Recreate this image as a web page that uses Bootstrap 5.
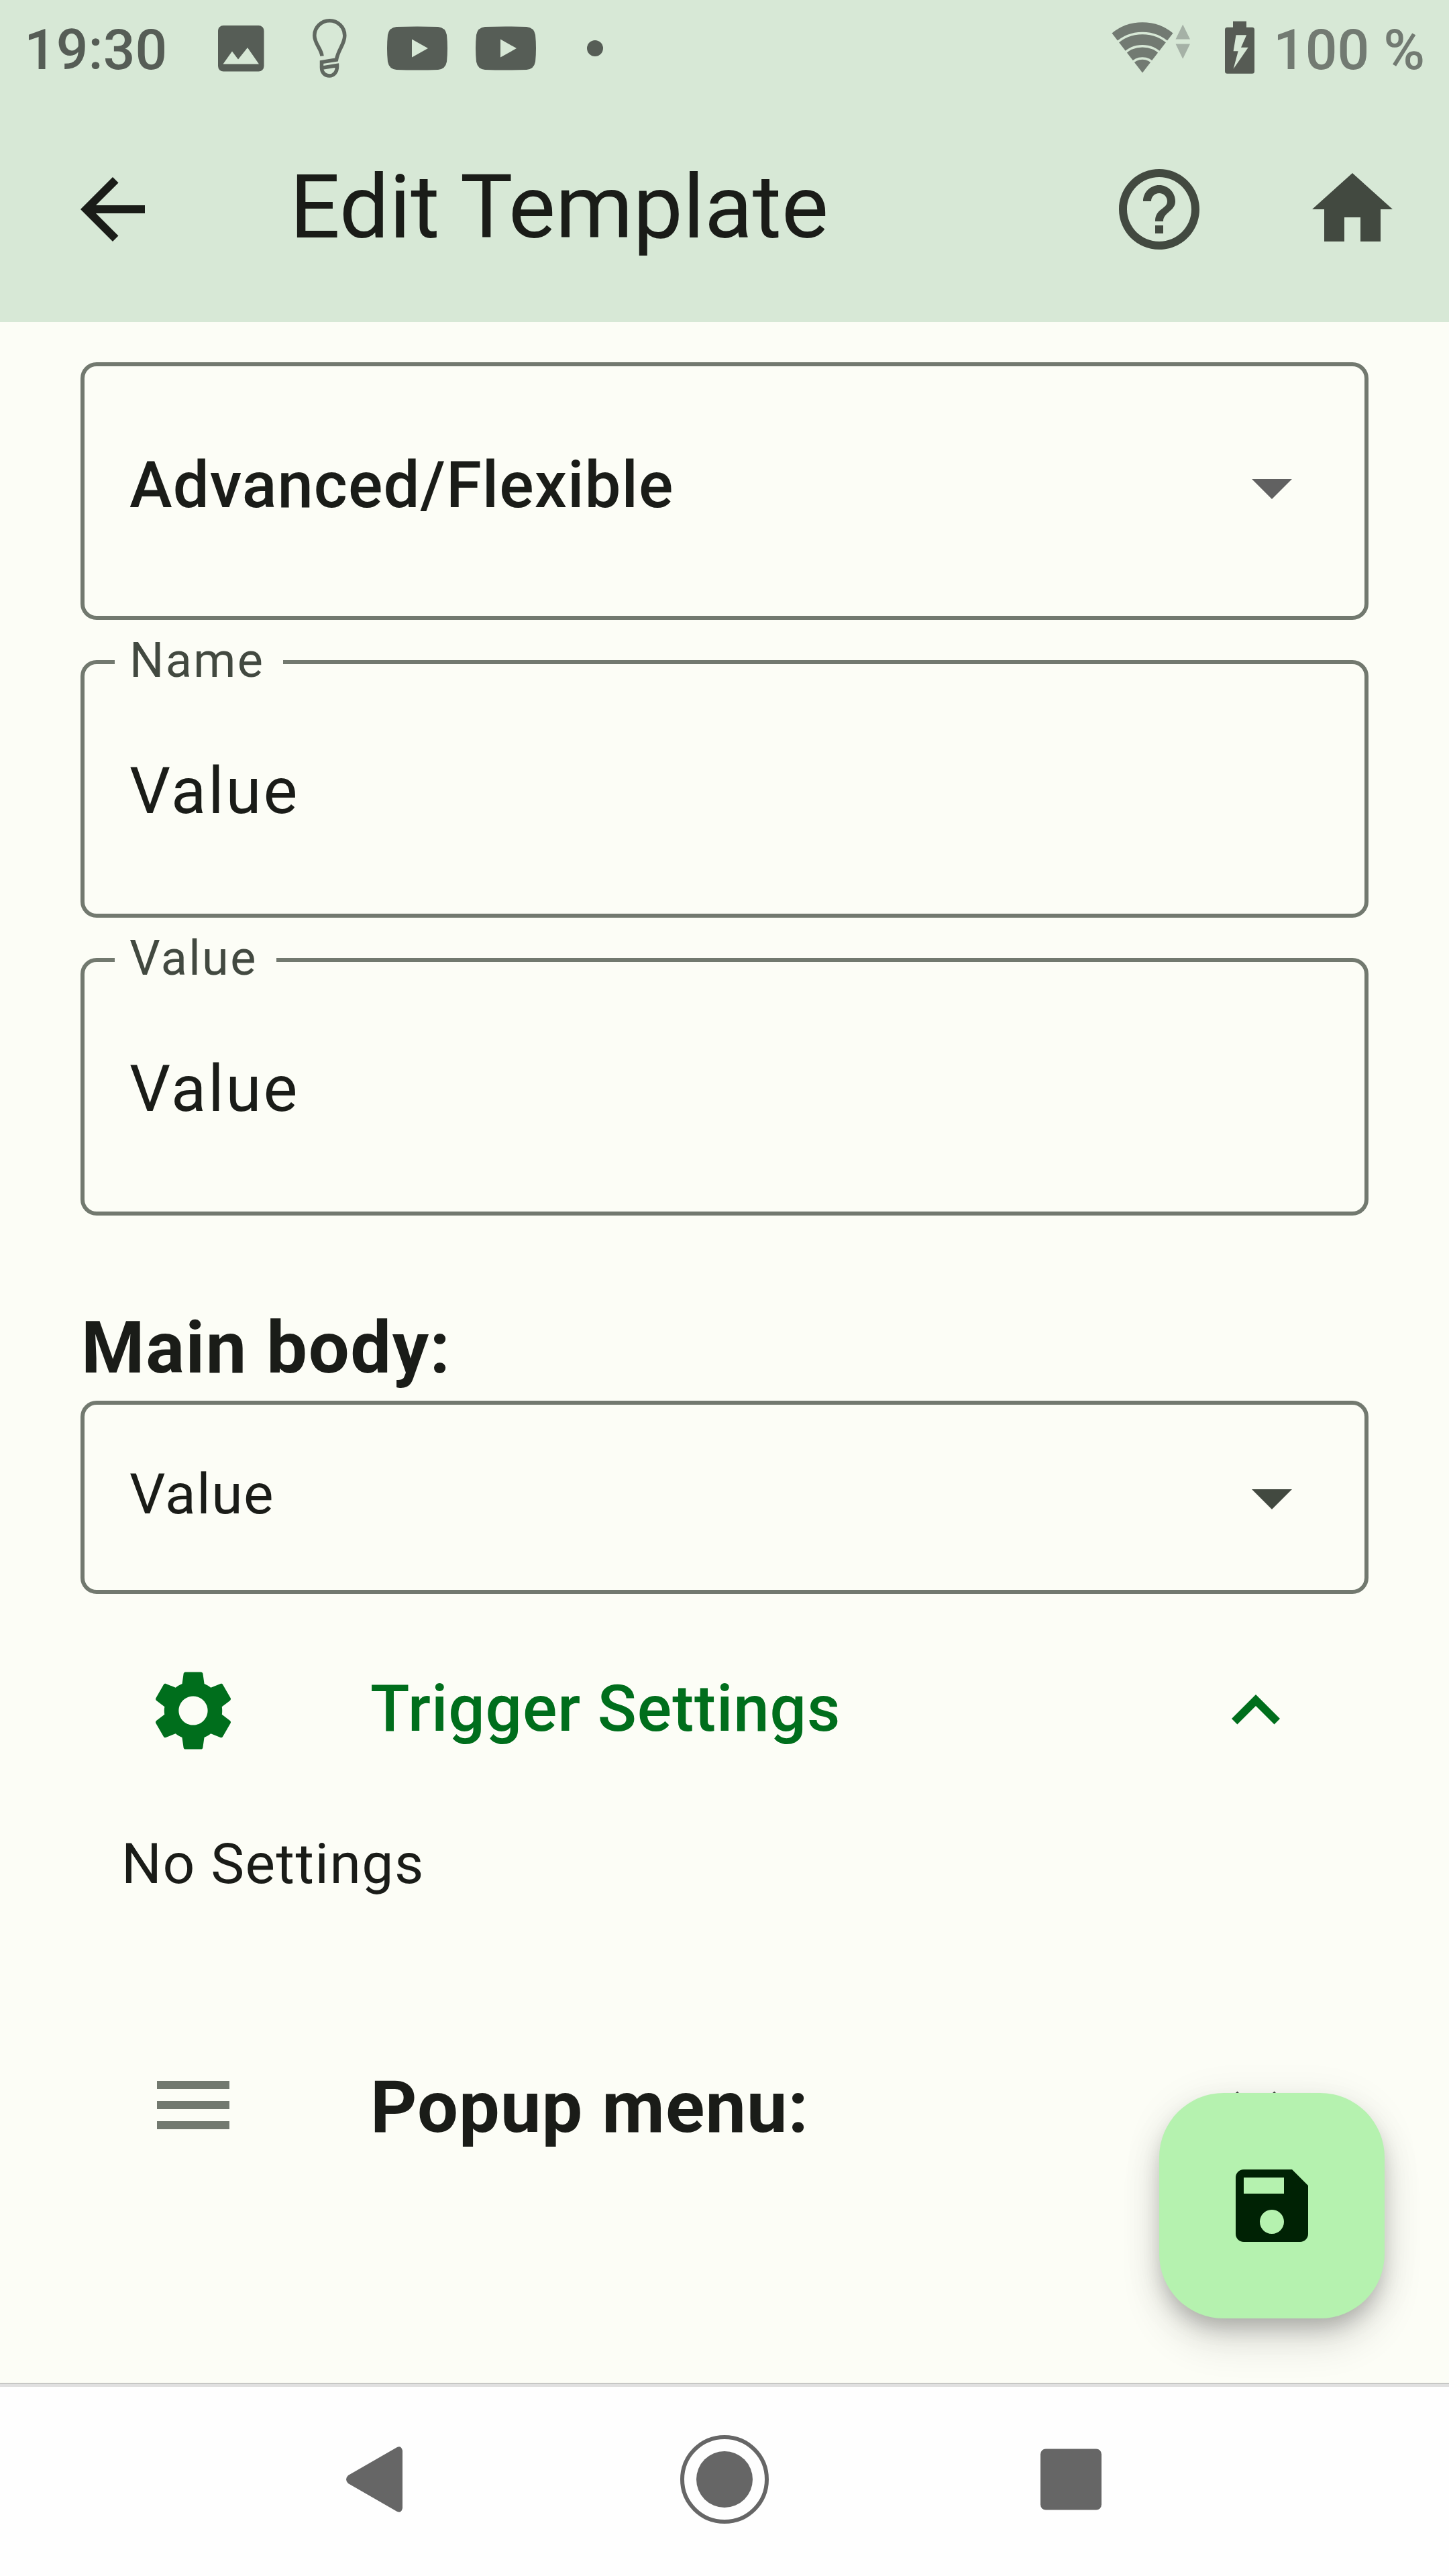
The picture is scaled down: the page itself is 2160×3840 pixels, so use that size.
<!DOCTYPE html>
<html lang="en">
<head>
<meta charset="utf-8">
<meta name="viewport" content="width=device-width, initial-scale=1">
<title>Edit Template</title>
<link href="https://cdn.jsdelivr.net/npm/bootstrap@5.3.0/dist/css/bootstrap.min.css" rel="stylesheet">
<style>
html,body{height:100%}
body{font-family:Roboto,"Noto Sans",sans-serif;background:#fcfdf6;color:#1a1c18;font-size:84px;line-height:98px;overflow:hidden}
svg{display:block;flex:none}
.screen{width:2160px;height:3840px}
.topbars{background:#d7e8d6}
.statusbar{height:144px;padding:0 36px;color:#565d56;font-weight:500}
.status-text{padding-top:6px}
.status-icons{margin-left:51.5px}
.status-radio{margin-right:18px}
.status-pct{color:#727a72}
.appbar{height:336px;padding:0 72px 0 96px}
.app-title{font-size:132px;line-height:156px;font-weight:400;padding-bottom:6px;margin-left:192px}
.home-icon{margin-left:144px}
.i24{width:144px;height:144px}
.dark{color:#424940}
.page{padding:60px 120px 0}
.outlined{height:384px;border:6px solid #72796f;border-radius:24px;padding:0 66px 0 67px;margin-bottom:60px;font-size:96px;line-height:112px;letter-spacing:3px}
.outlined.compact{height:288px;font-size:84px;line-height:98px;letter-spacing:1.5px;margin-bottom:0}
.type-name{font-weight:500;letter-spacing:1px;padding-bottom:18px}
.type-caret{margin-bottom:12px}
.input-text{padding-top:6px}
.float-label{position:absolute;top:-47px;left:45px;padding:0 28px 0 22px;background:#fcfdf6;color:#424940;font-size:72px;line-height:84px;letter-spacing:2.4px}
.section-title{font-size:108px;line-height:126px;font-weight:700}
.body-title{margin:134px 0 16px;padding-left:1px;letter-spacing:1.6px}
.tile{height:144px;padding:0 96px}
.tile-title{margin-left:192px}
.green{color:#006e1c}
.trigger-tile{margin-top:102px}
.trigger-title{font-size:96px;line-height:112px;font-weight:500;letter-spacing:.9px;padding-bottom:6px}
.note{margin-top:108px;padding-left:61px;letter-spacing:1.5px}
.popup-tile{margin-top:238px}
.popup-title{letter-spacing:1.1px;padding-top:6px}
.fab{position:absolute;left:1728px;top:3120px;width:336px;height:336px;border-radius:96px;background:#b5f2af;color:#002204;box-shadow:0 18px 30px -6px rgba(0,0,0,.2),0 36px 60px 0 rgba(0,0,0,.12),0 6px 60px 0 rgba(0,0,0,.08)}
.navkeys{height:288px;background:#fefefe;color:#666}
</style>
</head>
<body>
<div class="screen d-flex flex-column position-relative overflow-hidden">
  <header class="topbars flex-shrink-0">
    <div class="statusbar d-flex align-items-center justify-content-between">
      <div class="d-flex align-items-center">
        <span class="status-text">19:30</span>
        <svg class="status-icons" width="620" height="144" viewBox="300 0 620 144">
          <rect x="324" y="38" width="68.500" height="68.500" rx="8" fill="#565d56"/>
          <path d="M331.500 95.500 345 76.500 354 88.500 368 71 385 95.500z" fill="#d7e8d6"/>
          <path d="M479 83.500C478 73 467.800 65 467.800 53a22.300 22 0 0 1 45 0C512.800 66 503 74 500.500 89L478.500 92.500V99C478 109 484 113 490 113S502 108 501.500 97.500L480 101" fill="none" stroke="#606860" stroke-width="5.500"/>
          <path id="tube" d="M590 40q31-1 62 0q11 1 13 12q2 20 0 40q-2 11-13 12q-31 1-62 0q-11-1-13-12q-2-20 0-40q2-11 13-12zM613 58.500v27L637 72z" fill="#565d56" fill-rule="evenodd"/>
          <use href="#tube" x="132"/>
          <circle cx="886" cy="72" r="12" fill="#565d56"/>
        </svg>
      </div>
      <div class="d-flex align-items-center status-pct">
        <svg class="status-radio" width="230" height="144" viewBox="1650 0 230 144">
          <path d="M1703 108.500 1657.500 49.500Q1677 33.300 1703 33.300T1748.500 49.500z" fill="#727a72"/>
          <path d="M1662 66.200A58.500 58.500 0 0 1 1744 66.200M1674 81.500A39.500 39.500 0 0 1 1732 81.500M1686 95.500A21.300 21.300 0 0 1 1720 95.500" fill="none" stroke="#d7e8d6" stroke-width="3.500"/>
          <path d="M1763.200 36.500 1752.500 58.500h21.500zM1752.500 65.600h21.500L1763.200 87.800z" fill="#a5b1a6"/>
          <path d="M1838 31.700h20v9h8.500q3.500 0 3.500 3.500v62q0 3.500-3.500 3.500h-37q-3.500 0-3.500-3.500v-62q0-3.500 3.500-3.500h8.500zM1842.500 52.300 1838.600 76.300h7.100L1838.600 102.700 1860.700 70.700H1850L1858.200 52.300z" fill="#565b54" fill-rule="evenodd"/>
        </svg>
        <span class="status-text">100 %</span>
      </div>
    </div>
    <div class="appbar d-flex align-items-center">
      <svg class="i24" viewBox="0 0 24 24" fill="currentColor"><path d="M20 11H7.830l5.590-5.590L12 4l-8 8 8 8 1.410-1.410L7.830 13H20z"/></svg>
      <h1 class="app-title mb-0">Edit Template</h1>
      <svg class="i24 dark ms-auto" viewBox="0 0 24 24" fill="currentColor"><path d="M11 18h2v-2h-2v2zm1-16C6.480 2 2 6.480 2 12s4.480 10 10 10 10-4.480 10-10S17.520 2 12 2zm0 18c-4.410 0-8-3.590-8-8s3.590-8 8-8 8 3.590 8 8-3.590 8-8 8zm0-14c-2.210 0-4 1.790-4 4h2c0-1.100.9-2 2-2s2 .9 2 2c0 2-3 1.750-3 5h2c0-2.250 3-2.500 3-5 0-2.210-1.790-4-4-4z"/></svg>
      <svg class="i24 dark home-icon" viewBox="0 0 24 24" fill="currentColor"><path d="M10 20v-6h4v6h5v-8h3L12 3 2 12h3v8z"/></svg>
    </div>
  </header>

  <main class="page flex-grow-1">
    <div class="outlined d-flex align-items-center justify-content-between">
      <span class="type-name">Advanced/Flexible</span>
      <svg class="i24 type-caret" viewBox="0 0 24 24" fill="#616161"><path d="M7 10l5 5 5-5z"/></svg>
    </div>
    <div class="outlined d-flex align-items-center position-relative">
      <label class="float-label">Name</label><span class="input-text">Value</span>
    </div>
    <div class="outlined d-flex align-items-center position-relative mb-0">
      <label class="float-label">Value</label><span class="input-text">Value</span>
    </div>
    <h2 class="section-title body-title">Main body:</h2>
    <div class="outlined compact d-flex align-items-center justify-content-between">
      <span class="pb-2">Value</span>
      <svg class="i24 dark" viewBox="0 0 24 24" fill="currentColor"><path d="M7 10l5 5 5-5z"/></svg>
    </div>
    <div class="tile trigger-tile green d-flex align-items-center">
      <svg class="i24" viewBox="0 0 24 24" fill="currentColor"><path d="M19.140 12.940c.04-.3.060-.61.060-.94 0-.32-.02-.64-.07-.94l2.030-1.580c.18-.14.230-.41.120-.61l-1.920-3.320c-.12-.22-.37-.29-.59-.22l-2.390.96c-.5-.38-1.030-.7-1.620-.94l-.36-2.540c-.04-.24-.24-.41-.48-.41h-3.840c-.24 0-.43.170-.47.410l-.36 2.540c-.59.240-1.130.570-1.620.94l-2.390-.96c-.22-.08-.47 0-.59.220L2.740 8.870c-.12.210-.08.470.12.610l2.030 1.580c-.05.300-.09.630-.09.940s.02.640.070.940l-2.030 1.580c-.18.140-.23.410-.12.610l1.920 3.320c.12.220.370.290.590.220l2.390-.96c.5.380 1.030.7 1.620.94l.36 2.540c.05.240.240.410.480.410h3.840c.24 0 .44-.17.470-.41l.36-2.540c.59-.24 1.130-.56 1.620-.94l2.390.96c.22.080.470 0 .59-.22l1.920-3.320c.12-.22.070-.47-.12-.61l-2.010-1.580zM12 15.600c-1.980 0-3.600-1.620-3.600-3.600s1.620-3.600 3.600-3.600 3.600 1.620 3.600 3.600-1.620 3.600-3.600 3.600z"/></svg>
      <span class="tile-title trigger-title">Trigger Settings</span>
      <svg class="i24 ms-auto" viewBox="0 0 24 24" fill="currentColor"><path d="M12 8l-6 6 1.410 1.410L12 10.830l4.590 4.580L18 14z"/></svg>
    </div>
    <p class="note mb-0">No Settings</p>
    <div class="tile popup-tile d-flex align-items-center">
      <svg class="i24" viewBox="0 0 24 24" fill="#72796f"><path d="M3 18h18v-2H3v2zm0-5h18v-2H3v2zm0-7v2h18V6H3z"/></svg>
      <span class="tile-title section-title popup-title">Popup menu:</span>
      <svg class="i24 dark ms-auto" viewBox="0 0 24 24" fill="currentColor"><path d="M16.590 8.590L12 13.170 7.410 8.590 6 10l6 6 6-6z"/></svg>
    </div>
  </main>

  <button class="fab btn border-0 p-0 d-flex align-items-center justify-content-center" type="button" aria-label="Save">
    <svg class="i24" viewBox="0 0 24 24" fill="currentColor"><path d="M17 3H5c-1.110 0-2 .9-2 2v14c0 1.100.890 2 2 2h14c1.100 0 2-.9 2-2V7l-4-4zm-5 16c-1.660 0-3-1.340-3-3s1.340-3 3-3 3 1.340 3 3-1.340 3-3 3zm3-10H5V5h10v4z"/></svg>
  </button>

  <nav class="navkeys flex-shrink-0">
    <svg width="2160" height="288" viewBox="0 3552 2160 288" fill="currentColor">
      <path d="M0 3552h2160v6H0z" fill="#e0e0e0"/>
      <path d="M0 3552h2160v1H0z" fill="#a8a9a5"/>
      <path d="M519 3690 592 3648q6-3 8 5v86q-2 8-8 5L519 3702q-6-6 0-12z"/>
      <circle cx="1080" cy="3696" r="63" fill="none" stroke="currentColor" stroke-width="6"/>
      <circle cx="1080" cy="3696" r="42"/>
      <rect x="1551" y="3650.500" width="91" height="91" rx="8"/>
    </svg>
  </nav>
</div>
<script src="https://cdn.jsdelivr.net/npm/bootstrap@5.3.0/dist/js/bootstrap.bundle.min.js"></script>
</body>
</html>
